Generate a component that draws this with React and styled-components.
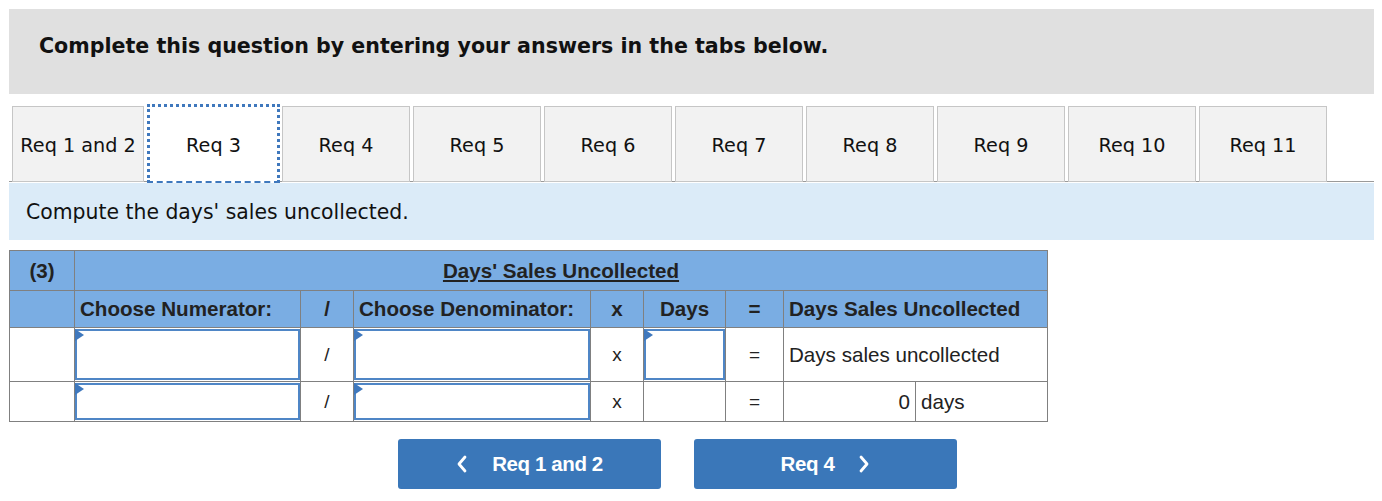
import styled, { createGlobalStyle } from 'styled-components';

const GlobalStyle = createGlobalStyle`
  body {
    margin: 0;
    background: #fff;
    font-family: "DejaVu Sans", Verdana, sans-serif;
  }
`;

const Page = styled.div`
  padding: 9px 8px 0 9px;
`;

const Banner = styled.div`
  background: #e0e0e0;
  height: 85px;
  display: flex;
  align-items: center;
  padding-left: 30px;
  padding-bottom: 11px;
  box-sizing: border-box;
  font-weight: bold;
  font-size: 20.6px;
  color: #111;
`;

const TabStrip = styled.div`
  display: flex;
  margin-top: 12px;
  padding-left: 3px;
  border-bottom: 1px solid #9a9a9a;
  height: 75px;
`;

const Tab = styled.div`
  box-sizing: border-box;
  flex: none;
  width: ${p => (p.wide ? 132 : p.active ? 133 : 128)}px;
  margin-right: ${p => (p.active ? 2 : 3)}px;
  display: flex;
  align-items: center;
  justify-content: center;
  font-size: 19.2px;
  color: #111;
  background: ${p => (p.active ? '#fff' : '#f2f2f2')};
  border: ${p => (p.active ? '3px dotted #3f78bd' : '1px solid #c6c6c6')};
  border-bottom: ${p => (p.active ? '2px dashed #3f78bd' : '1px solid #c6c6c6')};
  padding-top: 3px;
  margin-bottom: -1px;
  margin-top: ${p => (p.active ? '-2px' : '0')};
  height: ${p => (p.active ? '79px' : '76px')};
  white-space: nowrap;
`;

const Prompt = styled.div`
  margin-top: 1px;
  background: #dbebf8;
  height: 57px;
  display: flex;
  align-items: center;
  padding-left: 17px;
  font-size: 20.4px;
  color: #111;
`;

const Table = styled.table`
  margin-top: 10px;
  border-collapse: collapse;
  width: 1038px;
  font-family: "Liberation Sans", Arial, sans-serif;
  font-size: 20.6px;
  color: #222;
  table-layout: fixed;
`;

const Head = styled.th`
  background: #7aade3;
  border: 1px solid #808080;
  font-weight: bold;
  text-align: ${p => p.align || 'center'};
  padding: 0 5px;
  height: ${p => p.h || 36}px;
  white-space: nowrap;
`;

const Title = styled.span`
  text-decoration: underline;
`;

const Cell = styled.td`
  border: 1px solid #808080;
  text-align: ${p => p.align || 'center'};
  padding: ${p => (p.flush ? '0' : '0 5px')};
  height: ${p => p.h}px;
  font-size: ${p => (p.small ? '19px' : '20.6px')};
  vertical-align: middle;
`;

const Field = styled.div`
  position: relative;
  box-sizing: border-box;
  height: ${p => p.h}px;
  margin: 1px 0;
  border: 2px solid #4f86c6;
  background: #fff;

  &::before {
    content: '';
    position: absolute;
    left: -2px;
    top: -2px;
    border-left: 9px solid #3f78bd;
    border-top: 6px solid transparent;
    border-bottom: 6px solid transparent;
  }
`;

const Nav = styled.div`
  display: flex;
  gap: 33px;
  margin: 17px 0 0 389px;
`;

const NavButton = styled.button`
  width: 263px;
  height: 50px;
  background: #3a77b9;
  border: 0;
  border-radius: 3px;
  color: #fff;
  font-family: "Liberation Sans", Arial, sans-serif;
  font-weight: bold;
  font-size: 20.5px;
  letter-spacing: -0.4px;
  display: flex;
  align-items: center;
  justify-content: center;
  gap: 24px;
  padding: 0;
`;

const Chevron = ({ dir }) => (
  <svg width="12" height="18" viewBox="0 0 12 18">
    <path
      d={dir === 'left' ? 'M9 2 L3 9 L9 16' : 'M3 2 L9 9 L3 16'}
      fill="none"
      stroke="#fff"
      strokeWidth="2.8"
      strokeLinecap="round"
      strokeLinejoin="round"
    />
  </svg>
);

const tabs = ['Req 1 and 2', 'Req 3', 'Req 4', 'Req 5', 'Req 6', 'Req 7', 'Req 8', 'Req 9', 'Req 10', 'Req 11'];

export default function App() {
  return (
    <Page>
      <GlobalStyle />
      <Banner>Complete this question by entering your answers in the tabs below.</Banner>
      <TabStrip>
        {tabs.map((t, i) => (
          <Tab key={t} wide={i === 0} active={i === 1}>
            {t}
          </Tab>
        ))}
      </TabStrip>
      <Prompt>Compute the days' sales uncollected.</Prompt>
      <Table>
        <colgroup>
          <col style={{ width: 65 }} />
          <col style={{ width: 226 }} />
          <col style={{ width: 53 }} />
          <col style={{ width: 237 }} />
          <col style={{ width: 53 }} />
          <col style={{ width: 82 }} />
          <col style={{ width: 58 }} />
          <col style={{ width: 132 }} />
          <col style={{ width: 132 }} />
        </colgroup>
        <thead>
          <tr>
            <Head h={39}>(3)</Head>
            <Head h={39} colSpan={8}>
              <Title>Days' Sales Uncollected</Title>
            </Head>
          </tr>
          <tr>
            <Head />
            <Head align="left">Choose Numerator:</Head>
            <Head>/</Head>
            <Head align="left">Choose Denominator:</Head>
            <Head>x</Head>
            <Head>Days</Head>
            <Head>=</Head>
            <Head align="left" colSpan={2}>Days Sales Uncollected</Head>
          </tr>
        </thead>
        <tbody>
          <tr>
            <Cell h={53} />
            <Cell flush><Field h={51} /></Cell>
            <Cell small>/</Cell>
            <Cell flush><Field h={51} /></Cell>
            <Cell small>x</Cell>
            <Cell flush><Field h={51} /></Cell>
            <Cell small>=</Cell>
            <Cell align="left" colSpan={2}>Days sales uncollected</Cell>
          </tr>
          <tr>
            <Cell h={39} />
            <Cell flush><Field h={37} /></Cell>
            <Cell small>/</Cell>
            <Cell flush><Field h={37} /></Cell>
            <Cell small>x</Cell>
            <Cell />
            <Cell small>=</Cell>
            <Cell align="right">0</Cell>
            <Cell align="left">days</Cell>
          </tr>
        </tbody>
      </Table>
      <Nav>
        <NavButton>
          <Chevron dir="left" />
          Req 1 and 2
        </NavButton>
        <NavButton>
          Req 4
          <Chevron dir="right" />
        </NavButton>
      </Nav>
    </Page>
  );
}
